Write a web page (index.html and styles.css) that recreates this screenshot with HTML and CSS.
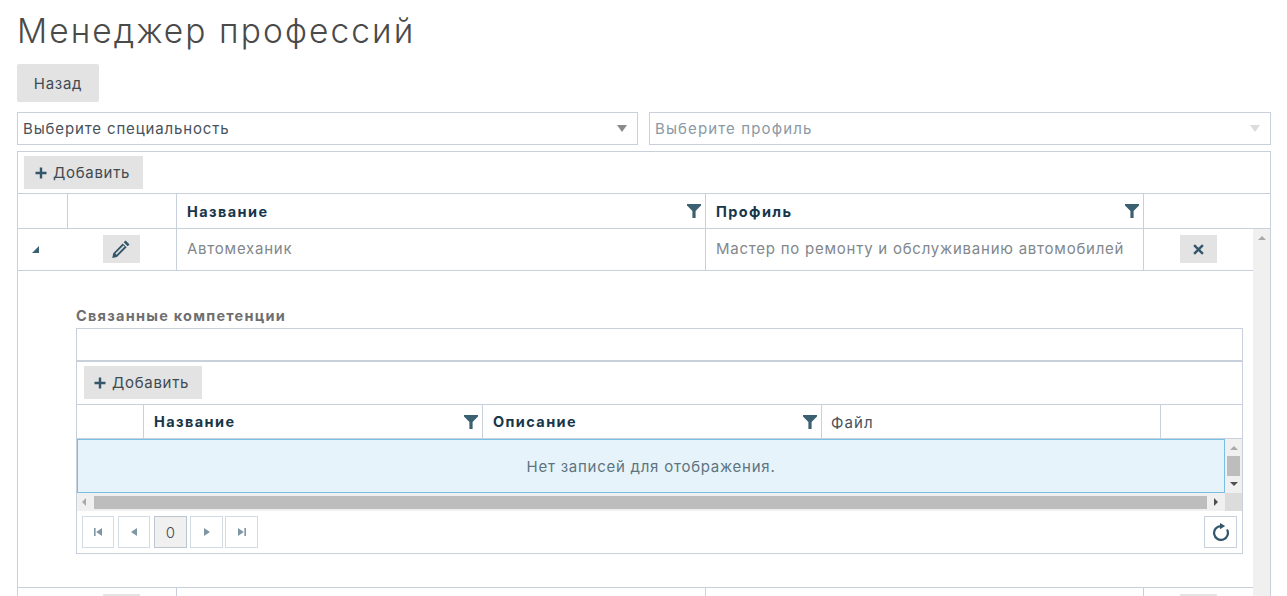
FILE: index.html
```html
<!DOCTYPE html>
<html lang="ru">
<head>
<meta charset="utf-8">
<title>Менеджер профессий</title>
<link rel="stylesheet" href="styles.css">
</head>
<body>
<main class="page">
  <h1 class="title">Менеджер профессий</h1>
  <button class="btn back">Назад</button>
  <div class="selects">
    <div class="select first"><span>Выберите специальность</span><i class="caret"></i></div>
    <div class="select off"><span>Выберите профиль</span><i class="caret"></i></div>
  </div>
  <section class="grid">
    <div class="toolbar">
      <button class="btn add"><svg class="plus" viewBox="0 0 12 12"><path d="M6 0.5v11M0.5 6h11"/></svg>Добавить</button>
    </div>
    <div class="row head outer-cols">
      <div class="c"></div><div class="c"></div>
      <div class="c th">Название<svg class="funnel" viewBox="0 0 14 14"><path d="M0 0h14v1.6L8.6 7v7H5.4V7L0 1.6z"/></svg></div>
      <div class="c th">Профиль<svg class="funnel" viewBox="0 0 14 14"><path d="M0 0h14v1.6L8.6 7v7H5.4V7L0 1.6z"/></svg></div>
      <div class="c"></div>
    </div>
    <div class="body">
      <div class="content">
        <div class="row data outer-cols">
          <div class="c tri-cell"><i class="tri"></i></div>
          <div class="c center"><button class="icon-btn"><svg viewBox="0 0 16 16"><path d="M12.1 0.4l3.5 3.5-1.7 1.7-3.5-3.5zM9.5 3l3.5 3.5-8.6 8.6-4.2 .9.9-4.2zM3 12l1 1 7.2-7.2-1-1z" fill-rule="evenodd"/></svg></button></div>
          <div class="c td">Автомеханик</div>
          <div class="c td">Мастер по ремонту и обслуживанию автомобилей</div>
          <div class="c center"><button class="icon-btn"><svg class="x" viewBox="0 0 10 10"><path d="M1 1l8 8M9 1l-8 8"/></svg></button></div>
        </div>
        <div class="detail">
          <h2 class="sub">Связанные компетенции</h2>
          <div class="inner">
            <div class="inner-top"></div>
            <div class="toolbar inner-bar">
              <button class="btn add"><svg class="plus" viewBox="0 0 12 12"><path d="M6 0.5v11M0.5 6h11"/></svg>Добавить</button>
            </div>
            <div class="inner-cols ihead">
              <div class="c"></div>
              <div class="c th">Название<svg class="funnel" viewBox="0 0 14 14"><path d="M0 0h14v1.6L8.6 7v7H5.4V7L0 1.6z"/></svg></div>
              <div class="c th">Описание<svg class="funnel" viewBox="0 0 14 14"><path d="M0 0h14v1.6L8.6 7v7H5.4V7L0 1.6z"/></svg></div>
              <div class="c th plain">Файл</div>
              <div class="c"></div>
            </div>
            <div class="scroller">
              <div class="empty">Нет записей для отображения.</div>
              <div class="vbar"><i class="up"></i><b></b><i class="down"></i></div>
              <div class="hbar"><i class="left"></i><b></b><i class="right"></i></div>
              <div class="corner"></div>
            </div>
            <div class="pager">
              <button class="pg"><svg viewBox="0 0 8 8"><path d="M0 0h1.6v8H0zM8 0v8L2.2 4z"/></svg></button>
              <button class="pg"><svg viewBox="0 0 8 8"><path d="M7 0v8L1 4z"/></svg></button>
              <button class="pg cur">0</button>
              <button class="pg wide"><svg viewBox="0 0 8 8"><path d="M1 0v8l6-4z"/></svg></button>
              <button class="pg wide"><svg viewBox="0 0 8 8"><path d="M8 0H6.4v8H8zM0 0v8l5.8-4z"/></svg></button>
              <button class="pg refresh"><svg viewBox="0 0 16 18"><path class="ring" d="M8 3.1A6.9 6.9 0 1 0 13.98 6.55"/><path d="M7 0l5.2 3.1L7 6.2z"/></svg></button>
            </div>
          </div>
        </div>
        <div class="row data outer-cols">
          <div class="c tri-cell"></div>
          <div class="c center"><button class="icon-btn"></button></div>
          <div class="c td"></div>
          <div class="c td"></div>
          <div class="c center"><button class="icon-btn"></button></div>
        </div>
      </div>
      <div class="vbar outer-v"><i class="up"></i></div>
    </div>
  </section>
</main>
</body>
</html>
```
FILE: styles.css
```css
* { box-sizing: border-box; }
html, body { margin: 0; height: 596px; overflow: hidden; background: #fff; }
body { font-family: Inter, "Noto Sans", sans-serif; font-size: 14px; color: #5a6570; }
.page { padding: 0 16px 0 17px; }
.title { margin: 0; height: 64px; padding-top: 9px; font-size: 33.5px; line-height: 44px; font-weight: 300; letter-spacing: 2.08px; color: #4a4a4a; }
.btn { border: 0; background: #e3e3e3; font: inherit; color: #3f4a52; padding: 0; cursor: pointer; }
.back { display: block; width: 82px; height: 38px; border-radius: 2px; font-size: 15px; letter-spacing: .7px; }
.selects { display: flex; gap: 11px; margin-top: 10px; height: 33px; }
.select { flex: 1; display: flex; align-items: center; justify-content: space-between; border: 1px solid #c8d0dc; padding: 0 10px 0 5px; font-size: 15px; color: #46525c; letter-spacing: .86px; }
.select.first { flex: none; width: 621px; }
.select.off { color: #8a99a5; letter-spacing: 1.12px; }
.caret { width: 0; height: 0; border-left: 5px solid transparent; border-right: 5px solid transparent; border-top: 7px solid #8a8a8a; }
.select.off .caret { border-top-color: #dcdcdc; }
.grid { margin-top: 6px; height: 460px; border: 1px solid #c8d0dc; border-bottom: 0; }
.toolbar { height: 42px; padding-top: 4px; padding-left: 6px; border-bottom: 1px solid #c8d0dc; }
.add { display: flex; align-items: center; gap: 6px; width: 119px; height: 33px; padding-left: 11px; font-size: 15px; letter-spacing: .7px; }
.plus { width: 12px; height: 12px; fill: none; stroke: #34566a; stroke-width: 2.4; }
.row { display: grid; }
.outer-cols { grid-template-columns: 50px 109px 529px 438px 1fr; }
.head { height: 35px; border-bottom: 1px solid #c8d0dc; }
.c { border-right: 1px solid #c8d0dc; min-width: 0; }
.c:last-child { border-right: 0; }
.th { display: flex; align-items: center; justify-content: space-between; padding: 0 4px 0 10px; font-weight: 700; color: #17364a; font-size: 14.5px; letter-spacing: 1.4px; }
.th.plain { font-weight: 400; color: #46525c; font-size: 15px; letter-spacing: 1.1px; padding-left: 9px; padding-top: 1px; }
.funnel { width: 14px; height: 14px; fill: #3b6072; flex: none; }
.body { display: flex; height: 367px; overflow: hidden; }
.content { width: 1235px; flex: none; }
.data { height: 42px; border-bottom: 1px solid #c8d0dc; }
.td { display: flex; align-items: center; padding: 0 0 2px 10px; color: #82878c; font-size: 15px; letter-spacing: .76px; white-space: nowrap; }
.center { display: flex; align-items: center; justify-content: center; padding-bottom: 1px; }
.data .center:nth-child(2) { padding-right: 2px; }
.data .center:last-child { padding-left: 36px; justify-content: flex-start; }
.icon-btn { width: 37px; height: 28px; border: 0; padding: 0; background: #e3e3e3; display: flex; align-items: center; justify-content: center; }
.icon-btn svg { width: 18px; height: 18px; fill: #34566a; }
.icon-btn .x { width: 11px; height: 11px; fill: none; stroke: #34566a; stroke-width: 2.2; }
.tri-cell { display: flex; align-items: center; padding-left: 14px; border-right: 0; }
.tri { width: 0; height: 0; border-left: 7px solid transparent; border-bottom: 7px solid #3b6072; }
.detail { height: 317px; padding: 35px 10px 0 58px; border-bottom: 1px solid #c8d0dc; }
.sub { margin: 0; height: 22px; font-size: 14.5px; line-height: 20px; font-weight: 700; color: #6f6f6f; letter-spacing: 1.25px; white-space: nowrap; }
.inner { border: 1px solid #c8d0dc; height: 226px; }
.inner-top { border-bottom: 2px solid #c8d0dc; height: 33px; }
.inner-bar { height: 43px; padding-left: 7px; padding-top: 4px; }
.inner-bar .add { width: 118px; padding-left: 10px; }
.inner-cols { display: grid; grid-template-columns: 67px 339px 339px 339px 1fr; height: 34px; border-bottom: 1px solid #c8d0dc; }
.ihead .th { padding-right: 4px; }
.scroller { position: relative; display: grid; grid-template-columns: 1148px 1fr; grid-template-rows: 54px 18px; background: #f0f0f0; border-bottom: 1px solid #c8d0dc; height: 72px; }
.empty { background: #e6f3fb; border: 1px solid #79bfe4; display: flex; align-items: center; justify-content: center; color: #5e7480; font-size: 15px; letter-spacing: .75px; }
.vbar { position: relative; background: #f0f0f0; display: flex; flex-direction: column; align-items: center; }
.vbar b { display: block; width: 13px; height: 20px; background: #bdbdbd; margin-top: 6px; }
.up, .down, .left, .right { display: block; width: 0; height: 0; flex: none; }
.up { margin-top: 7px; border-left: 4px solid transparent; border-right: 4px solid transparent; border-bottom: 4px solid #a9a9a9; }
.down { margin-top: 6px; border-left: 4px solid transparent; border-right: 4px solid transparent; border-top: 4px solid #505050; }
.hbar { display: flex; align-items: center; background: #f0f0f0; padding-left: 5px; }
.hbar b { display: block; width: 1113px; height: 13px; margin-left: 8px; background: #bdbdbd; }
.left { border-top: 4px solid transparent; border-bottom: 4px solid transparent; border-right: 4px solid #a9a9a9; }
.right { margin-left: 7px; border-top: 4px solid transparent; border-bottom: 4px solid transparent; border-left: 4px solid #505050; }
.corner { background: #dcdcdc; }
.pager { display: flex; gap: 4px; padding: 5px 5px 0; height: 43px; }
.pg { width: 32px; height: 32px; padding: 0; background: #fff; border: 1px solid #d3dbe4; display: flex; align-items: center; justify-content: center; font: inherit; color: #3f4a52; }
.pg svg { width: 8px; height: 8px; fill: #7f97a5; }
.pg.cur { width: 33px; background: #f0f0f0; border-color: #bcc6d2; font-size: 15px; font-weight: 300; margin-right: -1px; }
.pg.wide { width: 33px; margin-right: -2px; }
.pg.refresh { margin-left: auto; width: 33px; border-color: #c8d0dc; }
.pg .ring { fill: none; stroke: #34566a; stroke-width: 2.2; }
.pg.refresh svg { width: 16px; height: 18px; fill: #34566a; }
.outer-v { width: 17px; height: 367px; flex: none; }
```
